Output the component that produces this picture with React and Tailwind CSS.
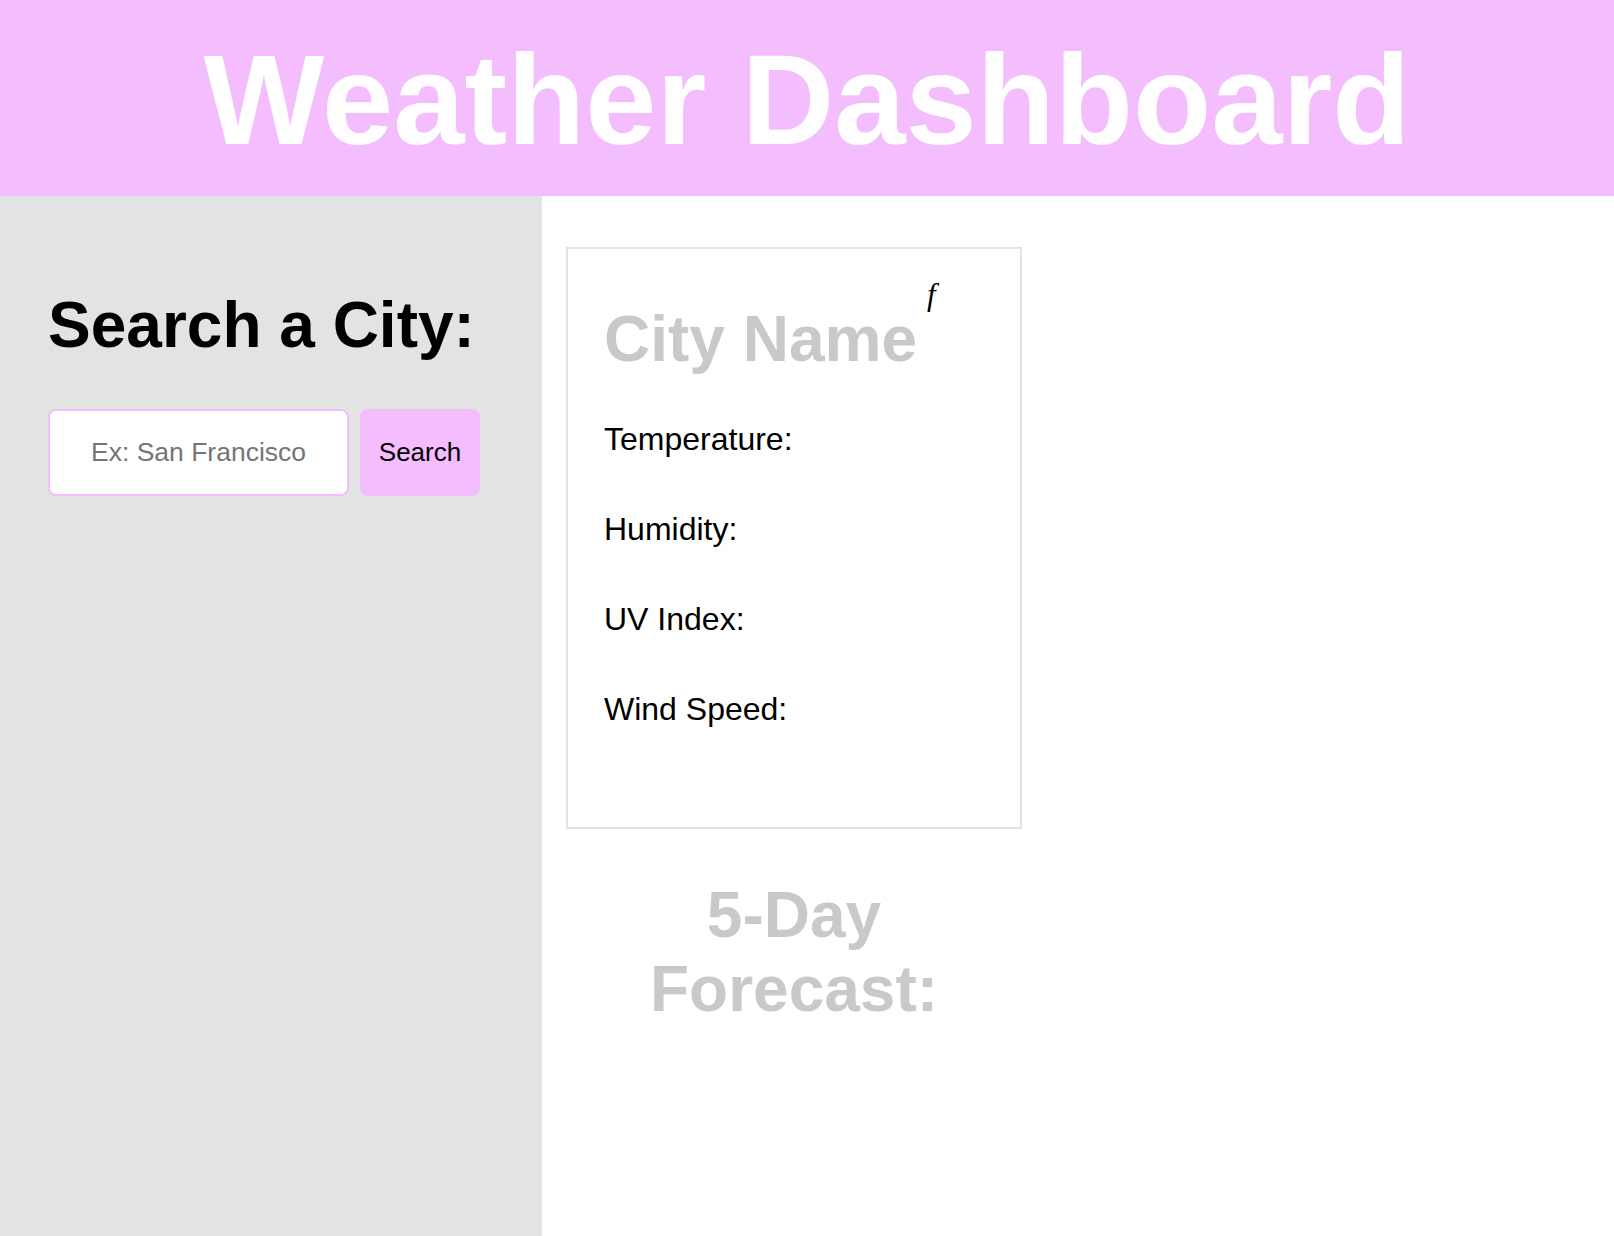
export default function App() {
  const labels = ['Temperature:', 'Humidity:', 'UV Index:', 'Wind Speed:'];

  return (
    <div className="min-h-[1236px] flex flex-col bg-white font-['Liberation_Sans',Arial,sans-serif]">
      {/* Header */}
      <header className="h-[196px] shrink-0 bg-[#f4bdfd] pt-[26px]">
        <h1 className="text-center text-[128px] font-bold leading-[1.149] text-white">
          Weather Dashboard
        </h1>
      </header>

      <div className="flex flex-1">
        {/* Sidebar */}
        <aside className="w-[542px] shrink-0 bg-[#e3e3e3] pl-[48px] pt-[93px]">
          <h2 className="text-[64px] font-bold leading-[1.149] text-black">Search a City:</h2>
          <div className="mt-[46px] flex gap-[11px]">
            <input
              type="text"
              placeholder="Ex: San Francisco"
              className="h-[87px] w-[301px] rounded-lg border-2 border-[#f4bdfd] bg-white text-center text-[26.5px] text-black outline-none placeholder:text-[#757575]"
            />
            <button
              type="button"
              className="h-[87px] w-[120px] rounded-lg bg-[#f4bdfd] text-[26px] text-black"
            >
              Search
            </button>
          </div>
        </aside>

        {/* Main */}
        <main className="pl-[24px] pt-[51px]">
          <div className="flex w-[456px] flex-col">
            <div className="h-[582px] border-2 border-[#e3e3e3] pl-[36px] pt-[54px]">
              <h2 className="text-[64px] font-bold leading-[1.149] text-[#c9c9c9]">
                City Name
                <span className="relative -top-[26px] ml-[10px] align-top font-['Liberation_Serif',serif] text-[31px] font-normal italic text-black">
                  f
                </span>
              </h2>
              <div className="mt-[44px] flex flex-col gap-[53px]">
                {labels.map((label) => (
                  <p key={label} className="text-[32px] leading-[37px] text-black">
                    {label}
                  </p>
                ))}
              </div>
            </div>

            <h2 className="mt-[50px] text-center text-[64px] font-bold leading-[1.149] text-[#c9c9c9]">
              5-Day Forecast:
            </h2>
          </div>
        </main>
      </div>
    </div>
  );
}
